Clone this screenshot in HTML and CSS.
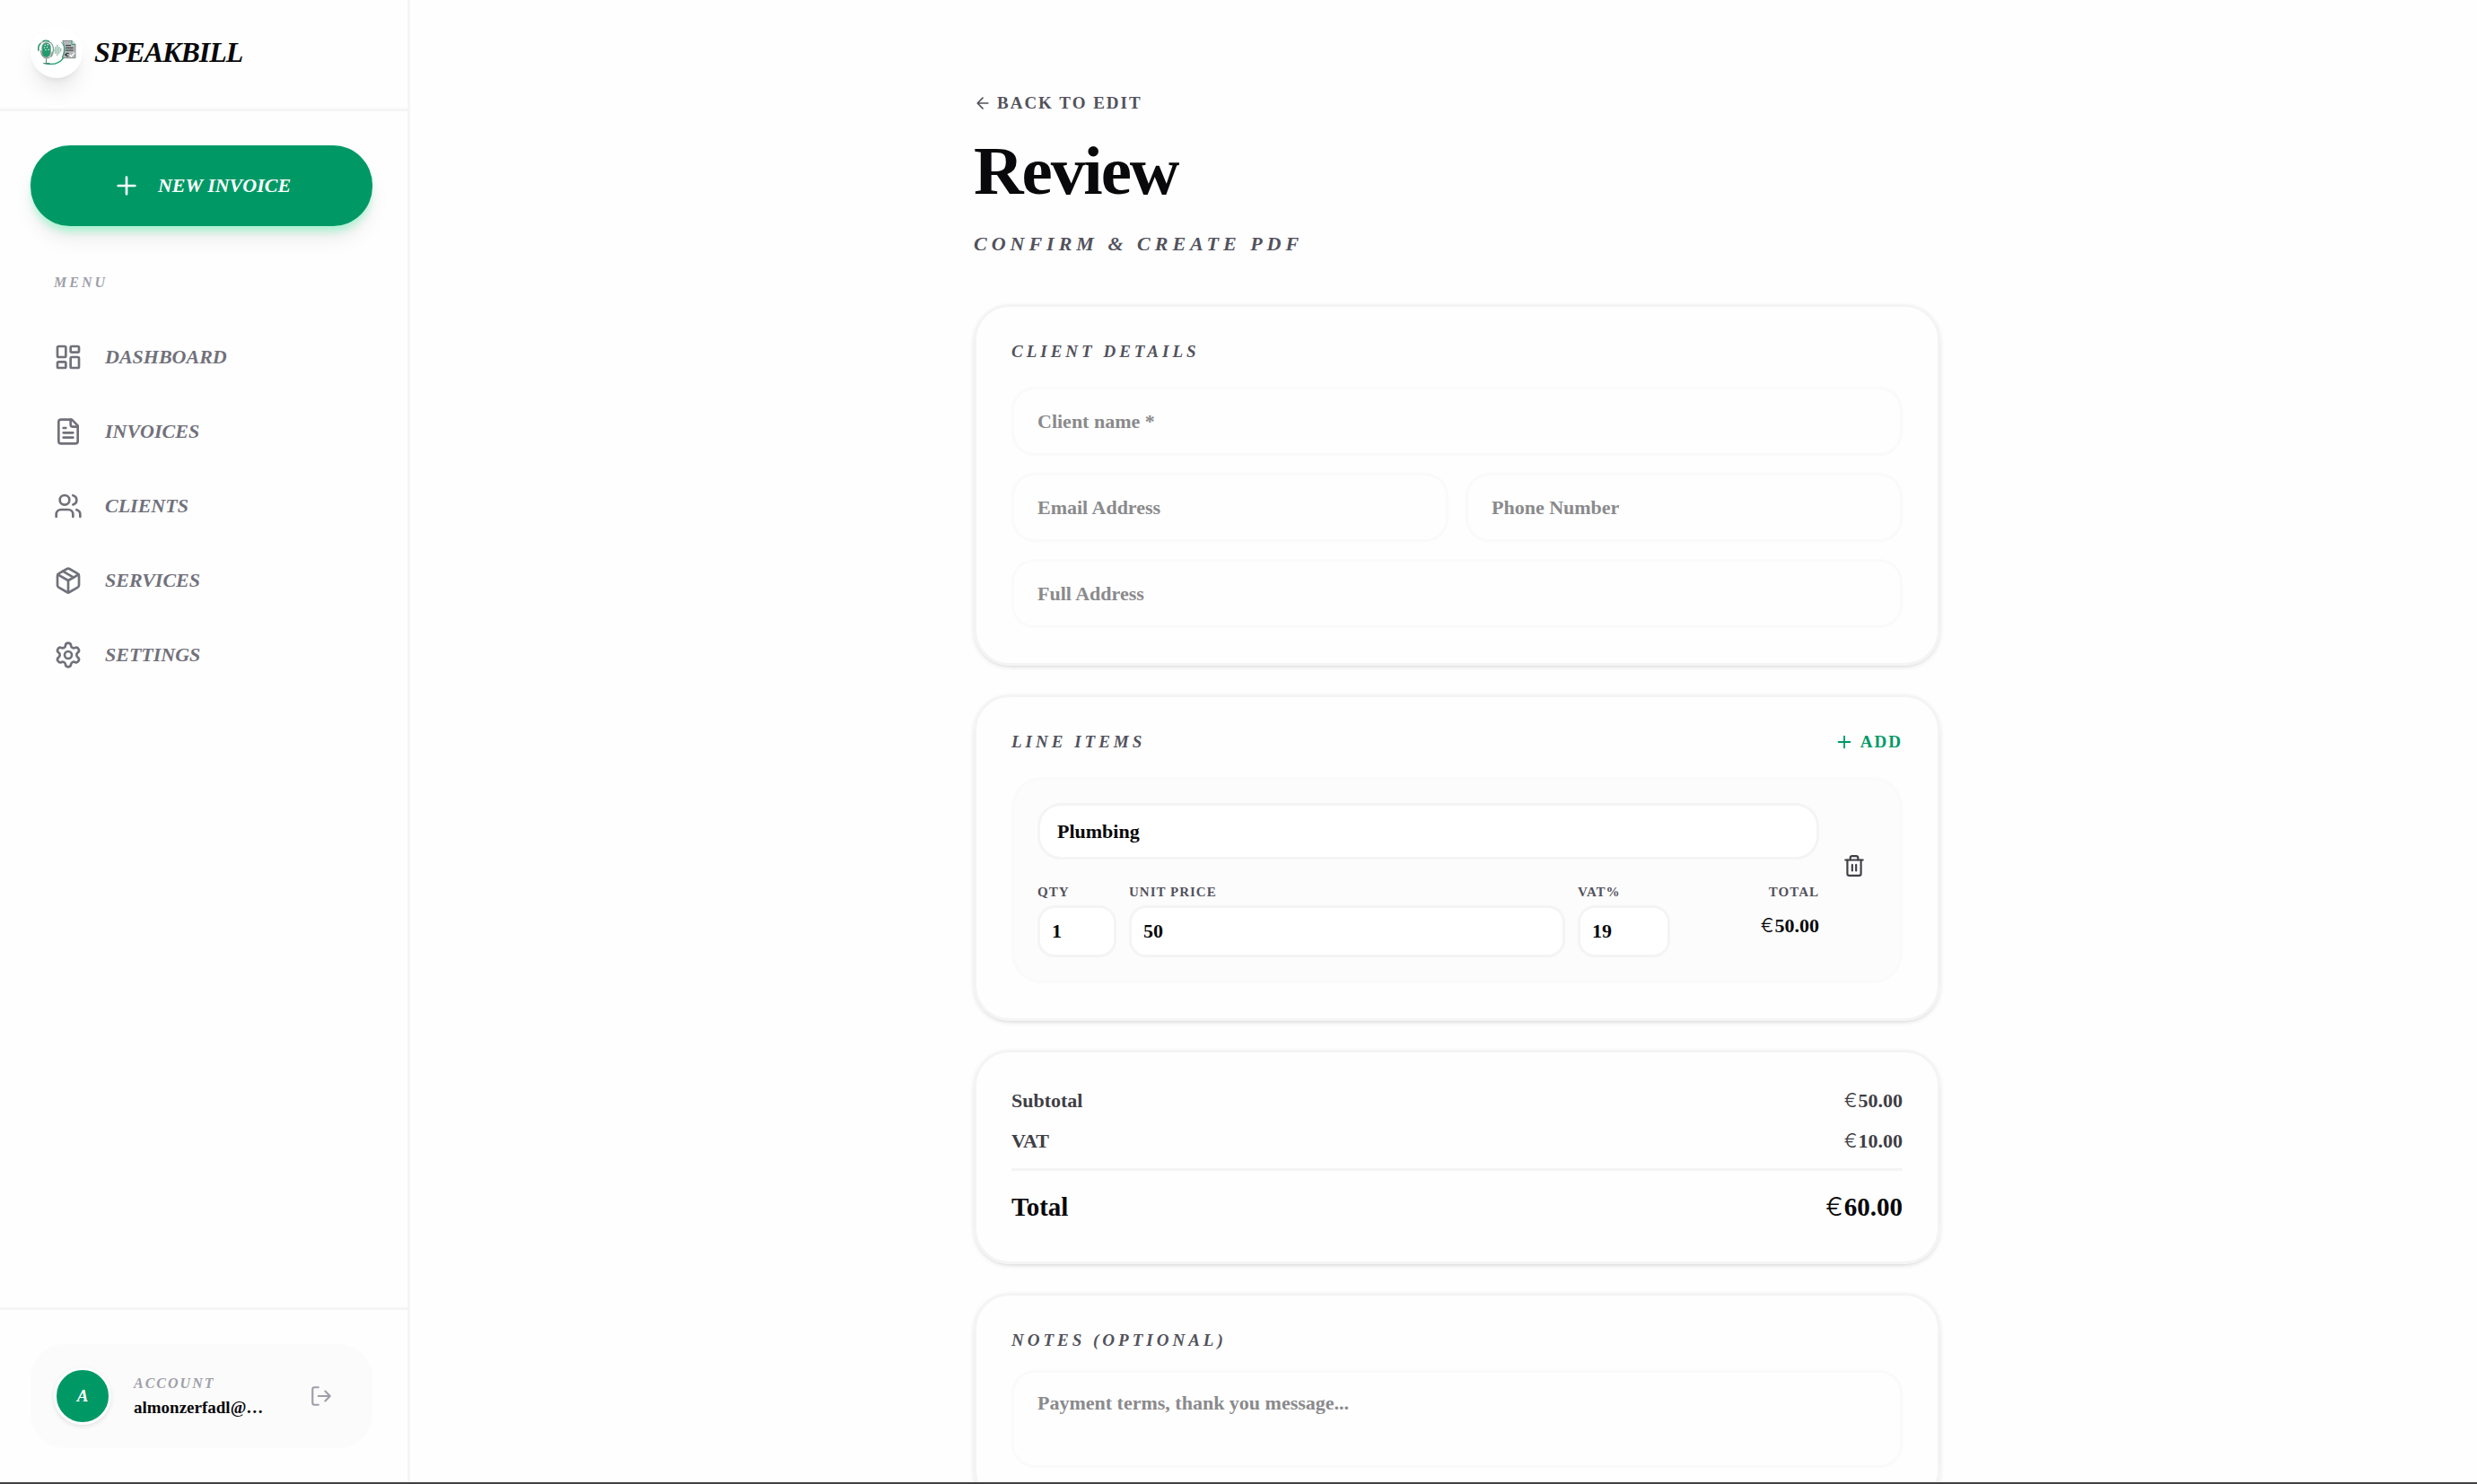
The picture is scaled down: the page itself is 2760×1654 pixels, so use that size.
FILE: index.html
```html
<!DOCTYPE html>
<html lang="en">
<head>
<meta charset="UTF-8" />
<meta name="viewport" content="width=device-width, initial-scale=1" />
<title>Speakbill - Review</title>
<link rel="stylesheet" href="styles.css">
</head>
<body>
<div class="app">
  <aside class="sidebar">
    <div class="brand">
      <div class="brand-logo">
        <svg width="45" height="30" viewBox="60 72 136 90" fill="none">
          <path d="M66 114C60 88 84 74 104 84c14 8 16 34 4 50" stroke="#8fa8a0" stroke-width="4"/>
          <path d="M66 112c-2-10 0-18 7-24M80 80c8-3 16-2 22 2" stroke="#1f9c6c" stroke-width="4"/>
          <rect x="78" y="86" width="28" height="48" rx="14" fill="#1f9c6c" stroke="#7d8f88" stroke-width="3"/>
          <path d="M86 94h4M95 92h4M84 102h4M93 101h4M88 110h4M98 109h4" stroke="#e8f3ee" stroke-width="4"/>
          <path d="M74 112c0 34 36 34 38 4M92 140v14M82 155h22" stroke="#5f7a70" stroke-width="3"/>
          <path d="M117 106v10M123 99v24M129 92v38M135 99v24M141 104v12" stroke="#6fa890" stroke-width="3"/>
          <path d="M147 79h31l12 12v46h-44c7-20 8-40 1-58z" fill="#b5b8ba" stroke="#55605c" stroke-width="2"/>
          <path d="M178 79v12h12" fill="#e4e7e6" stroke="#1f9c6c" stroke-width="3"/>
          <path d="M157 95h18M157 103h26M157 111h26" stroke="#202523" stroke-width="3"/>
          <path d="M168 122c-7-3-11 0-11 4s5 7 10 4M154 126h9" stroke="#202523" stroke-width="3"/>
          <path d="M171 127l5 5 12-13" stroke="#fff" stroke-width="4"/>
          <path d="M86 155c26 6 50 2 64-19" stroke="#1f9c6c" stroke-width="4"/>
          <path d="M143 84c14 14 13 34 2 50" stroke="#1f9c6c" stroke-width="3"/>
        </svg>
      </div>
      <span class="brand-name">SPEAKBILL</span>
    </div>

    <div class="sidebar-body">
      <button class="new-invoice" type="button">
        <svg class="icon" width="32" height="32" viewBox="0 0 24 24"><path d="M5 12h14M12 5v14"/></svg>
        NEW INVOICE
      </button>
      <p class="menu-label">MENU</p>
      <nav class="nav">
        <a href="#" class="nav-item">
          <svg class="icon" width="32" height="32" viewBox="0 0 24 24"><rect x="3" y="3" width="7" height="9" rx="1"/><rect x="14" y="3" width="7" height="5" rx="1"/><rect x="14" y="12" width="7" height="9" rx="1"/><rect x="3" y="16" width="7" height="5" rx="1"/></svg>
          DASHBOARD
        </a>
        <a href="#" class="nav-item">
          <svg class="icon" width="32" height="32" viewBox="0 0 24 24"><path d="M15 2H6a2 2 0 0 0-2 2v16a2 2 0 0 0 2 2h12a2 2 0 0 0 2-2V7Z"/><path d="M14 2v4a2 2 0 0 0 2 2h4"/><path d="M10 9H8M16 13H8M16 17H8"/></svg>
          INVOICES
        </a>
        <a href="#" class="nav-item">
          <svg class="icon" width="32" height="32" viewBox="0 0 24 24"><path d="M16 21v-2a4 4 0 0 0-4-4H6a4 4 0 0 0-4 4v2"/><circle cx="9" cy="7" r="4"/><path d="M22 21v-2a4 4 0 0 0-3-3.87"/><path d="M16 3.13a4 4 0 0 1 0 7.75"/></svg>
          CLIENTS
        </a>
        <a href="#" class="nav-item">
          <svg class="icon" width="32" height="32" viewBox="0 0 24 24"><path d="M11 21.73a2 2 0 0 0 2 0l7-4A2 2 0 0 0 21 16V8a2 2 0 0 0-1-1.73l-7-4a2 2 0 0 0-2 0l-7 4A2 2 0 0 0 3 8v8a2 2 0 0 0 1 1.73z"/><path d="M12 22V12"/><path d="M3.29 7 12 12l8.71-5"/><path d="m7.5 4.27 9 5.15"/></svg>
          SERVICES
        </a>
        <a href="#" class="nav-item">
          <svg class="icon" width="32" height="32" viewBox="0 0 24 24"><path d="M9.671 4.136a2.34 2.34 0 0 1 4.659 0 2.34 2.34 0 0 0 3.319 1.915 2.34 2.34 0 0 1 2.33 4.033 2.34 2.34 0 0 0 0 3.831 2.34 2.34 0 0 1-2.33 4.033 2.34 2.34 0 0 0-3.319 1.915 2.34 2.34 0 0 1-4.659 0 2.34 2.34 0 0 0-3.32-1.915 2.34 2.34 0 0 1-2.33-4.033 2.34 2.34 0 0 0 0-3.831A2.34 2.34 0 0 1 6.35 6.051a2.34 2.34 0 0 0 3.319-1.915"/><circle cx="12" cy="12" r="3"/></svg>
          SETTINGS
        </a>
      </nav>
    </div>

    <div class="sidebar-footer">
      <div class="account">
        <div class="avatar">A</div>
        <div class="account-info">
          <p class="account-label">ACCOUNT</p>
          <p class="account-email">almonzerfadl@…</p>
        </div>
        <button class="logout" type="button" aria-label="Log out">
          <svg class="icon" width="26" height="26" viewBox="0 0 24 24"><path d="M9 21H5a2 2 0 0 1-2-2V5a2 2 0 0 1 2-2h4"/><path d="m16 17 5-5-5-5M21 12H9"/></svg>
        </button>
      </div>
    </div>
  </aside>

  <main class="main">
    <div class="page">
      <a href="#" class="back">
        <svg class="icon" width="20" height="20" viewBox="0 0 24 24"><path d="m12 19-7-7 7-7M19 12H5"/></svg>
        BACK TO EDIT
      </a>
      <h1 class="title">Review</h1>
      <p class="subtitle">CONFIRM &amp; CREATE PDF</p>

      <form class="cards">
        <section class="card">
          <div class="card-head">
            <h2>CLIENT DETAILS</h2>
          </div>
          <div class="fields">
            <input class="field wide" type="text" placeholder="Client name *" aria-label="Client name">
            <input class="field" type="email" placeholder="Email Address" aria-label="Email Address">
            <input class="field" type="tel" placeholder="Phone Number" aria-label="Phone Number">
            <input class="field wide" type="text" placeholder="Full Address" aria-label="Full Address">
          </div>
        </section>

        <section class="card">
          <div class="card-head">
            <h2>LINE ITEMS</h2>
            <button class="add" type="button">
              <svg class="icon" width="22" height="22" viewBox="0 0 24 24"><path d="M5 12h14M12 5v14"/></svg>
              ADD
            </button>
          </div>
          <div class="item">
            <div class="item-main">
              <input class="item-name" type="text" value="Plumbing" aria-label="Description">
              <div class="item-grid">
                <div>
                  <label for="qty">QTY</label>
                  <input id="qty" type="text" inputmode="numeric" value="1">
                </div>
                <div>
                  <label for="price">UNIT PRICE</label>
                  <input id="price" type="text" inputmode="decimal" value="50">
                </div>
                <div>
                  <label for="vat">VAT%</label>
                  <input id="vat" type="text" inputmode="decimal" value="19">
                </div>
                <div class="item-total">
                  <span class="item-label">TOTAL</span>
                  <output for="qty price"><span class="euro">€</span>50.00</output>
                </div>
              </div>
            </div>
            <button class="trash" type="button" aria-label="Remove item">
              <svg class="icon" width="26" height="26" viewBox="0 0 24 24"><path d="M3 6h18"/><path d="M19 6v14a2 2 0 0 1-2 2H7a2 2 0 0 1-2-2V6"/><path d="M8 6V4a2 2 0 0 1 2-2h4a2 2 0 0 1 2 2v2"/><path d="M10 11v6M14 11v6"/></svg>
            </button>
          </div>
        </section>

        <section class="card">
          <dl class="totals">
            <div class="totals-row"><dt>Subtotal</dt><dd><span class="euro">€</span>50.00</dd></div>
            <div class="totals-row"><dt>VAT</dt><dd><span class="euro">€</span>10.00</dd></div>
            <div class="totals-row grand"><dt>Total</dt><dd><span class="euro">€</span>60.00</dd></div>
          </dl>
        </section>

        <section class="card notes">
          <div class="card-head">
            <h2>NOTES (OPTIONAL)</h2>
          </div>
          <textarea class="field" placeholder="Payment terms, thank you message..." aria-label="Notes"></textarea>
        </section>
      </form>
    </div>
  </main>
</div>
</body>
</html>
```
FILE: styles.css
```css
* {
  box-sizing: border-box; margin: 0; padding: 0;
}
body {
  font-family: "Liberation Serif", "Times New Roman", serif;
  font-weight: 700; font-size: 22px; line-height: 30px;
  background: #fefefe; color: #09090b;
}
input, textarea, button {
  font: inherit; color: inherit;
}
button {
  background: none; border: none; cursor: pointer;
}
a {
  color: inherit; text-decoration: none;
}
.icon {
  fill: none; stroke: currentColor; stroke-width: 2;
  stroke-linecap: round; stroke-linejoin: round; flex-shrink: 0;
}
.app {
  display: flex; height: 100vh; overflow: hidden; border-bottom: 2px solid #414143;
}

/* sidebar */
.sidebar {
  width: 457px; flex-shrink: 0; display: flex; flex-direction: column;
  border-right: 3px solid #f4f5f5; font-style: italic;
}
.brand {
  display: flex; align-items: center; gap: 13px;
  height: 124px; padding: 0 34px 5px; border-bottom: 3px solid #f4f5f5;
}
.brand-logo {
  width: 58px; height: 58px; border-radius: 50%; background: #fff;
  display: flex; align-items: center; justify-content: center;
  box-shadow: 0 16px 24px -5px rgba(0,0,0,0.1), 0 6px 10px -6px rgba(0,0,0,0.1);
}
.brand-name {
  font-size: 32px; letter-spacing: -1px;
}
.sidebar-body {
  flex: 1; padding: 38px 39px 0 34px;
}
.new-invoice {
  display: flex; align-items: center; justify-content: center; gap: 19px;
  width: 100%; height: 90px; border-radius: 44px;
  background: #009966; color: #fff; font-style: italic;
  box-shadow: 0 8px 10px -3px #a4f4cf, 0 16px 24px -5px rgba(0,0,0,0.1);
}
.menu-label {
  margin: 53px 26px 34px; font-size: 16px; line-height: 20px;
  letter-spacing: 3px; color: #9f9fa9;
}
.nav {
  display: flex; flex-direction: column; gap: 6px;
}
.nav-item {
  display: flex; align-items: center; gap: 25px;
  height: 77px; padding: 0 26px; color: #71717b;
}
.sidebar-footer {
  padding: 38px 39px 38px 34px; border-top: 3px solid #f4f5f5;
}
.account {
  display: flex; align-items: center; padding: 26px;
  background: #fbfbfb; border-radius: 38px;
}
.avatar {
  width: 64px; height: 64px; border: 3px solid #fff; border-radius: 50%;
  background: #009966; color: #fff; font-size: 19px;
  display: flex; align-items: center; justify-content: center;
  box-shadow: 0 2px 5px rgba(0,0,0,0.1);
}
.account-info {
  flex: 1; padding-left: 25px;
}
.account-label {
  font-size: 16px; line-height: 26px; letter-spacing: 2px; color: #9f9fa9;
}
.account-email {
  font-size: 19px; line-height: 28px; font-style: normal;
}
.logout {
  display: flex; padding: 18px; color: #9f9fa9;
}

/* review page */
.main {
  flex: 1; overflow: hidden; padding: 101px 0 0 30px;
}
.page {
  max-width: 1077px; margin: 0 auto;
}
.back {
  display: inline-flex; align-items: center; gap: 6px; vertical-align: top;
  font-size: 19px; line-height: 28px; letter-spacing: 2px; color: #52525c;
}
.title {
  margin-top: 21px; font-size: 77px; line-height: 77px; letter-spacing: -2px;
}
.subtitle {
  margin: 27px 0 51px; line-height: 32px; font-style: italic;
  letter-spacing: 5px; color: #52525c;
}
.cards {
  display: flex; flex-direction: column; gap: 32px;
}
.card {
  padding: 39px; border: 3px solid #f4f4f5; border-radius: 40px;
  box-shadow: 0 2px 5px rgba(0,0,0,0.1), 0 2px 3px -2px rgba(0,0,0,0.1);
}
.card-head {
  display: flex; align-items: center; justify-content: space-between;
  height: 21px; margin-bottom: 29px;
}
.card-head h2 {
  font-size: 19px; line-height: 21px; font-style: italic;
  letter-spacing: 4px; color: #52525c;
}
.fields {
  display: grid; grid-template-columns: 1fr 1fr; gap: 19px;
}
.wide {
  grid-column: 1 / -1;
}
.field {
  display: block; width: 100%; height: 77px; padding: 0 26px;
  background: transparent; border: 3px solid #fafafa; border-radius: 26px;
}
.field::placeholder {
  color: #8a8a8c; opacity: 1;
}
.add {
  display: flex; align-items: center; gap: 7px;
  font-size: 19px; line-height: 21px; letter-spacing: 2px; color: #009966;
}
.item {
  display: flex; gap: 14px; padding: 26px;
  background: #fcfcfc; border: 3px solid #fafafa; border-radius: 34px;
}
.item-main {
  flex: 1;
}
.item input {
  display: block; width: 100%; height: 58px; padding: 0 13px;
  background: #fff; border: 3px solid #f4f4f5; border-radius: 19px;
}
.item .item-name {
  height: 63px; padding: 0 19px; border-radius: 26px;
}
.item-grid {
  display: grid; grid-template-columns: 88px 1fr 103px 152px; gap: 14px; margin-top: 26px;
}
.item-grid label, .item-label {
  display: block; margin-bottom: 4px; font-size: 15px; line-height: 21px;
  letter-spacing: 1px; color: #52525c;
}
.item-total {
  text-align: right;
}
.item-total output {
  display: block; line-height: 46px;
}
.euro {
  margin-right: 1px; font-family: Inter, sans-serif; font-weight: 300; line-height: 1;
}
.trash {
  display: flex; align-self: center; padding: 12px; margin-bottom: 32px; color: #3f3f46;
}
.totals-row {
  display: flex; justify-content: space-between; margin-bottom: 15px; color: #3f3f46;
}
.totals .grand {
  margin-bottom: 0; padding-top: 18px; border-top: 3px solid #f4f4f5;
  font-size: 29px; line-height: 44px; color: #09090b;
}
.notes .card-head {
  margin-bottom: 23px;
}
.notes .field {
  height: 109px; padding-top: 19px; resize: none;
}
```
